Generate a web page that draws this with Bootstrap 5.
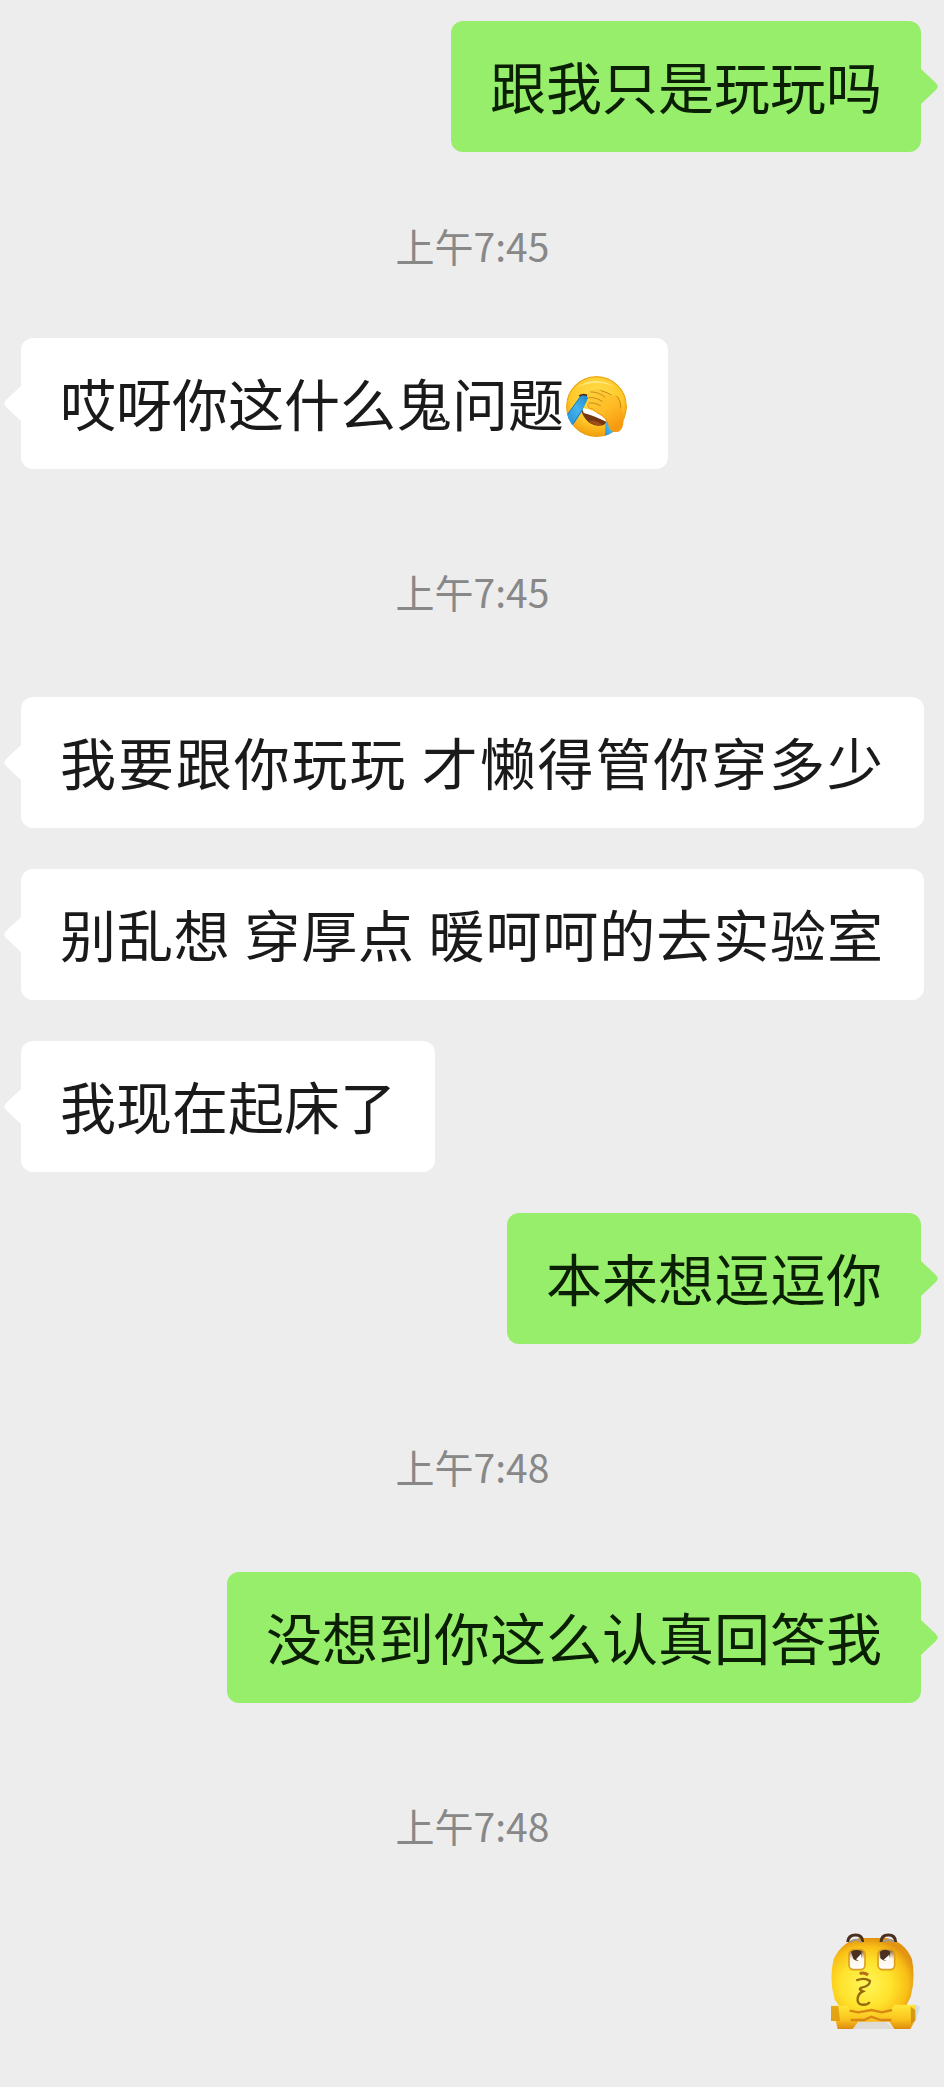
<!DOCTYPE html>
<html lang="zh-CN">
<head>
<meta charset="utf-8">
<meta name="viewport" content="width=device-width, initial-scale=1">
<title>聊天记录</title>
<link href="https://cdn.jsdelivr.net/npm/bootstrap@5.3.0/dist/css/bootstrap.min.css" rel="stylesheet">
<style>
  body { background: #ededed; font-family: "Noto Sans CJK SC", sans-serif; }
  .chat { gap: 41px; padding: 21px 20px 55px 21px; }
  .bubble { position: relative; padding: 23px 39px 26px; border-radius: 12px; font-size: 56px; line-height: 82px; color: #1a1a1a; background: #fff; }
  .bubble::before { content: ""; position: absolute; top: 48px; right: 100%; width: 17px; height: 35px; background: inherit; clip-path: polygon(100% 0, 12% 40%, 0 50%, 12% 60%, 100% 100%); }
  .mine { margin-right: 3px; color: #0a1f04; background: #96ee6b; }
  .mine::before { right: auto; left: 100%; clip-path: polygon(0 0, 88% 40%, 100% 50%, 88% 60%, 0 100%); }
  .full-line { padding-right: 41px; text-align: justify; text-align-last: justify; }
  .stamp { padding: 55px 0 39px; font-size: 39px; line-height: 52px; color: #888; }
  .stamp-near { padding: 26px 0; }
  .face { width: 61px; height: 61px; margin: 8px 2px 0; }
  .sticker { width: 90px; height: 98px; margin-right: 3px; }
</style>
</head>
<body>
<main class="chat d-flex flex-column">
  <div class="bubble mine align-self-end">跟我只是玩玩吗</div>
  <time class="stamp stamp-near text-center" datetime="07:45">上午7:45</time>
  <div class="bubble align-self-start d-flex align-items-center">哎呀你这什么鬼问题<svg class="face flex-shrink-0" viewBox="0 0 180 180" role="img" aria-label="笑着捂脸">
      <defs>
        <radialGradient id="skin" cx=".5" cy=".35" r=".65"><stop offset="0" stop-color="#ffe052"/><stop offset=".65" stop-color="#ffc928"/><stop offset="1" stop-color="#f29b0c"/></radialGradient>
        <linearGradient id="hand" x1="0" y1="0" x2=".6" y2="1"><stop offset="0" stop-color="#ffd23c"/><stop offset=".6" stop-color="#ffbb24"/><stop offset="1" stop-color="#f79a12"/></linearGradient>
        <linearGradient id="tear" x1="1" y1="0" x2="0" y2="1"><stop offset="0" stop-color="#1d83c4"/><stop offset=".5" stop-color="#43b4ee"/><stop offset="1" stop-color="#1f8fd8"/></linearGradient>
        <clipPath id="disc"><circle cx="90" cy="90" r="90"/></clipPath>
      </defs>
      <g clip-path="url(#disc)">
        <circle cx="90" cy="90" r="90" fill="url(#skin)"/>
        <circle cx="90" cy="90" r="88" fill="none" stroke="#e9a21a" stroke-width="3"/>
        <path d="M30 35Q85-6 145 32Q88 8 30 35Z" fill="#fff09a" opacity=".7"/>
        <path d="M42 96Q85 105 121 132Q119 146 94 147Q58 144 42 96Z" fill="#743713"/>
        <path d="M48 94Q84 99 122 129L119 135Q82 117 52 109Z" fill="#fff"/>
        <path d="M66 133Q86 126 108 145Q82 148 66 133Z" fill="#a04d18"/>
        <path d="M117 134L143 160L138 180H115Z" fill="url(#tear)"/>
        <path d="M2 115L44 57Q58 51 68 63Q56 82 47 106L20 145Q3 142 2 115Z" fill="url(#tear)"/>
        <path d="M5 113L44 59M22 140L48 99" fill="none" stroke="#17649b" stroke-width="2"/>
        <path d="M39 59Q52 50 68 60" fill="none" stroke="#493118" stroke-width="5"/>
      </g>
      <path d="M64 52Q66 39 82 42Q91 34 109 41Q125 48 136 61Q142 50 154 61Q164 72 163 94Q174 117 168 146Q163 169 141 165Q127 162 124 141Q117 124 103 116Q88 108 77 96Q60 98 65 81Q57 73 66 66Q59 60 64 52Z" fill="url(#hand)"/>
      <path d="M73 47Q94 46 115 62M68 64Q86 61 107 75M68 79Q86 77 101 87M103 43Q124 49 134 56M150 60Q161 70 162 93" fill="none" stroke="#a9701a" stroke-width="2" stroke-linecap="round"/>
      <path d="M65 81Q62 97 77 96Q90 109 105 116Q119 124 125 143" fill="none" stroke="#d97b0b" stroke-width="2"/>
    </svg></div>
  <time class="stamp text-center" datetime="07:45">上午7:45</time>
  <div class="bubble full-line">我要跟你玩玩 才懒得管你穿多少</div>
  <div class="bubble full-line">别乱想 穿厚点 暖呵呵的去实验室</div>
  <div class="bubble align-self-start">我现在起床了</div>
  <div class="bubble mine align-self-end">本来想逗逗你</div>
  <time class="stamp text-center" datetime="07:48">上午7:48</time>
  <div class="bubble mine align-self-end">没想到你这么认真回答我</div>
  <time class="stamp text-center" datetime="07:48">上午7:48</time>
  <svg class="sticker align-self-end" viewBox="95 65 270 294" role="img" aria-label="托腮卖萌">
    <defs>
      <radialGradient id="ball" cx=".42" cy=".62" r=".62"><stop offset="0" stop-color="#fff65a"/><stop offset=".5" stop-color="#ffe32c"/><stop offset=".82" stop-color="#f9bf16"/><stop offset="1" stop-color="#e29412"/></radialGradient>
      <linearGradient id="arm" x1="0" y1="0" x2="0" y2="1"><stop offset="0" stop-color="#ffe838"/><stop offset=".6" stop-color="#fbc31d"/><stop offset="1" stop-color="#dd8b0e"/></linearGradient>
      <linearGradient id="eye" x1="0" y1="0" x2="0" y2="1"><stop offset="0" stop-color="#8a5a26"/><stop offset=".45" stop-color="#fff5e4"/><stop offset="1" stop-color="#fff"/></linearGradient>
    </defs>
    <path d="M345 285L362 292L350 334L338 345Z" fill="#d6dde0"/>
    <path d="M180 86H262Q318 98 338 150Q349 210 334 262L310 310H132L106 270Q88 210 103 150Q126 98 180 86Z" fill="url(#ball)"/>
    <path d="M178 338H260L285 359H160Z" fill="#dedad5"/>
    <path d="M145 98Q147 77 169 77Q190 77 190 98M245 98Q246 77 267 77Q288 77 289 98" fill="none" stroke="#49301f" stroke-width="9"/>
    <path d="M152 99Q168 84 186 99M252 99Q268 84 284 99" fill="none" stroke="#a39a93" stroke-width="6"/>
    <rect x="149" y="121" width="48" height="60" rx="14" fill="url(#eye)" stroke="#dca022" stroke-width="5"/>
    <rect x="236" y="121" width="50" height="60" rx="14" fill="url(#eye)" stroke="#dca022" stroke-width="5"/>
    <path d="M155 127Q168 117 187 126L185 149Q174 160 162 149ZM242 127Q258 116 273 127L268 150Q256 160 243 147Z" fill="#493020"/>
    <path d="M170 150L185 134V158ZM253 151L269 137L270 158Z" fill="#fff"/>
    <path d="M181 193Q194 187 206 197" fill="none" stroke="#b66d17" stroke-width="9"/>
    <path d="M171 213Q197 203 212 215Q211 230 187 235Q174 239 191 246Q177 252 175 267Q173 283 187 286Q205 288 211 278" fill="none" stroke="#94690c" stroke-width="7"/>
    <path d="M94 289H145L157 306H196L216 298L236 306H270L286 286H347V334L333 359H285L270 337H177L160 359H115L109 334H94Z" fill="url(#arm)"/>
    <path d="M151 304L177 309L216 302L248 309L278 302M154 332H194L216 322L244 332H276" fill="none" stroke="#d78713" stroke-width="7"/>
    <path d="M94 290H117L122 335H94Z" fill="#dc940d" opacity=".75"/>
    <path d="M334 292L348 301V333L335 344Z" fill="#c98610" opacity=".75"/>
  </svg>
</main>
<script src="https://cdn.jsdelivr.net/npm/bootstrap@5.3.0/dist/js/bootstrap.bundle.min.js"></script>
</body>
</html>
